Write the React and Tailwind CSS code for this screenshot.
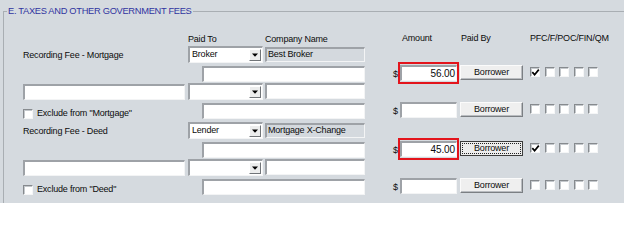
import React from "react";

const FONT = "font-['Liberation_Sans',Arial,sans-serif] text-[9px] tracking-[-0.2px] text-[#0c0c0c]";
const sunkenWhite =
  "bg-white border-t-2 border-l-2 border-b border-r border-t-[#9ea2a7] border-l-[#9ea2a7] border-b-[#f3f4f5] border-r-[#f3f4f5]";
const sunkenGray =
  "bg-[#d4d9de] border-t-2 border-l-2 border-b border-r border-t-[#9ea2a7] border-l-[#9ea2a7] border-b-[#f3f4f5] border-r-[#f3f4f5]";

function TextBox({ className = "", children }) {
  return <div className={`${sunkenWhite} h-[16px] ${className}`}>{children}</div>;
}

function Dropdown({ value = "", className = "" }) {
  return (
    <div className={`${sunkenWhite} h-[17px] flex items-stretch ${className}`}>
      <div className="flex-1 pl-[2px] flex items-center whitespace-nowrap overflow-hidden">{value}</div>
      <div className="w-[12px] my-[1px] mr-[1px] bg-[#eceded] border border-t-white border-l-white border-b-[#707478] border-r-[#707478] flex items-center justify-center">
        <svg width="6" height="4" viewBox="0 0 6 4">
          <path d="M0 0.5h6L3 3.8z" fill="#000" />
        </svg>
      </div>
    </div>
  );
}

function Company({ value }) {
  return (
    <div className={`${sunkenGray} h-[15px] mt-[1px] pl-[1px] flex items-center whitespace-nowrap`}>{value}</div>
  );
}

function Amount({ value = "", red = false }) {
  return (
    <div className="relative w-[57px] h-[16px] self-start -mt-[1px]">
      <div className={`${sunkenWhite} w-full h-full flex items-center justify-end pr-[1px]`}>
        <span className="text-[10px] tracking-[-0.1px]">{value}</span>
      </div>
      {red && <div className="absolute -left-[2px] -right-[2px] -top-[3px] -bottom-[3px] border-2 border-[#e3141c]" />}
    </div>
  );
}

function Button({ focused = false }) {
  if (focused) {
    return (
      <div className="w-[63px] h-[15px] self-start -mt-[1px] bg-[#ededed] border border-[#3c3c3c] flex p-[1px]">
        <div className="flex-1 border border-dotted border-[#222] flex items-center justify-center">Borrower</div>
      </div>
    );
  }
  return (
    <div className="w-[63px] h-[15px] self-start -mt-[1px] bg-[#efefef] border border-t-[#fbfbfb] border-l-[#fbfbfb] border-b-[#7b7f83] border-r-[#7b7f83] shadow-[inset_-1px_-1px_0_#b9bcc0] flex items-center justify-center">
      Borrower
    </div>
  );
}

function Check({ checked = false }) {
  return (
    <div className="relative w-[10px] h-[10px] bg-white border-t border-l border-t-[#868a8e] border-l-[#868a8e] border-b border-r border-b-[#f5f6f7] border-r-[#f5f6f7] shadow-[inset_1px_1px_0_#c4c8cc]">
      {checked && (
        <svg className="absolute left-[0px] top-[0px]" width="9" height="9" viewBox="0 0 9 9">
          <path d="M1.3 4.2 L3.6 6.7 L7.8 1.6" stroke="#000" strokeWidth="1.7" fill="none" />
        </svg>
      )}
    </div>
  );
}

function Checks({ first = false }) {
  return (
    <div className="flex gap-[4.5px] self-start mt-[1px]">
      <Check checked={first} />
      <Check />
      <Check />
      <Check />
      <Check />
    </div>
  );
}

function Block({ start, label, paidTo, company, amount, focused, exclude }) {
  const r1 = ["row-start-2", "row-start-6"][start];
  const r2 = ["row-start-3", "row-start-7"][start];
  const r3 = ["row-start-4", "row-start-8"][start];
  const r4 = ["row-start-5", "row-start-9"][start];
  return (
    <>
      <div className={`col-start-1 ${r1} self-center whitespace-nowrap`}>{label}</div>
      <Dropdown value={paidTo} className={`col-start-3 col-span-2 ${r1} self-start`} />
      <div className={`col-start-6 ${r1} self-start`}>
        <Company value={company} />
      </div>

      <TextBox className={`col-start-4 col-span-3 ${r2} self-start`} />
      <div className={`col-start-8 ${r2} self-start mt-[2px] -ml-[1px]`}>$</div>
      <div className={`col-start-9 ${r2} self-start`}>
        <Amount value={amount} red />
      </div>
      <div className={`col-start-11 ${r2} self-start`}>
        <Button focused={focused} />
      </div>
      <div className={`col-start-13 ${r2} self-start`}>
        <Checks first />
      </div>

      <TextBox className={`col-start-1 ${r3} self-start mt-[1px]`} />
      <Dropdown className={`col-start-3 col-span-2 ${r3} self-start`} />
      <TextBox className={`col-start-6 ${r3} self-start`} />

      <div className={`col-start-1 ${r4} self-start mt-[4px] flex items-center gap-[4px] whitespace-nowrap`}>
        <Check />
        <span>{exclude}</span>
      </div>
      <TextBox className={`col-start-4 col-span-3 ${r4} self-start`} />
      <div className={`col-start-8 ${r4} self-start mt-[2px] -ml-[1px]`}>$</div>
      <div className={`col-start-9 ${r4} self-start`}>
        <Amount />
      </div>
      <div className={`col-start-11 ${r4} self-start`}>
        <Button />
      </div>
      <div className={`col-start-13 ${r4} self-start`}>
        <Checks />
      </div>
    </>
  );
}

export default function App() {
  return (
    <div className={`w-[624px] h-[203px] overflow-hidden bg-[#d5dadf] ${FONT}`}>
      <fieldset className="ml-[3px] mt-[5px] w-[660px] h-[220px] border-t border-l border-[#a9aeb3] p-0 m-0">
        <legend className="ml-[3px] px-[1px] text-[#31349f] leading-[12px] text-[9.3px] tracking-[-0.3px]">
          E. TAXES AND OTHER GOVERNMENT FEES
        </legend>
        <div className="pt-[16px] pl-[19px] grid grid-cols-[162px_3px_14px_61px_2px_100px_29px_6px_57px_3px_63px_7px_120px] grid-rows-[13px_20px_17px_20px_19px_20px_17px_20px_19px]">
          <div className="col-start-3 col-span-2 row-start-1 self-center">Paid To</div>
          <div className="col-start-6 row-start-1 self-center whitespace-nowrap">Company Name</div>
          <div className="col-start-9 row-start-1 self-center pl-[2px] -mt-[1px]">Amount</div>
          <div className="col-start-11 row-start-1 self-center pl-[1px] -mt-[1px] whitespace-nowrap">Paid By</div>
          <div className="col-start-13 row-start-1 self-center -mt-[1px] whitespace-nowrap">PFC/F/POC/FIN/QM</div>

          <Block
            start={0}
            label="Recording Fee - Mortgage"
            paidTo="Broker"
            company="Best Broker"
            amount="56.00"
            exclude={'Exclude from "Mortgage"'}
          />
          <Block
            start={1}
            label="Recording Fee - Deed"
            paidTo="Lender"
            company="Mortgage X-Change"
            amount="45.00"
            focused
            exclude={'Exclude from "Deed"'}
          />
        </div>
      </fieldset>
    </div>
  );
}
